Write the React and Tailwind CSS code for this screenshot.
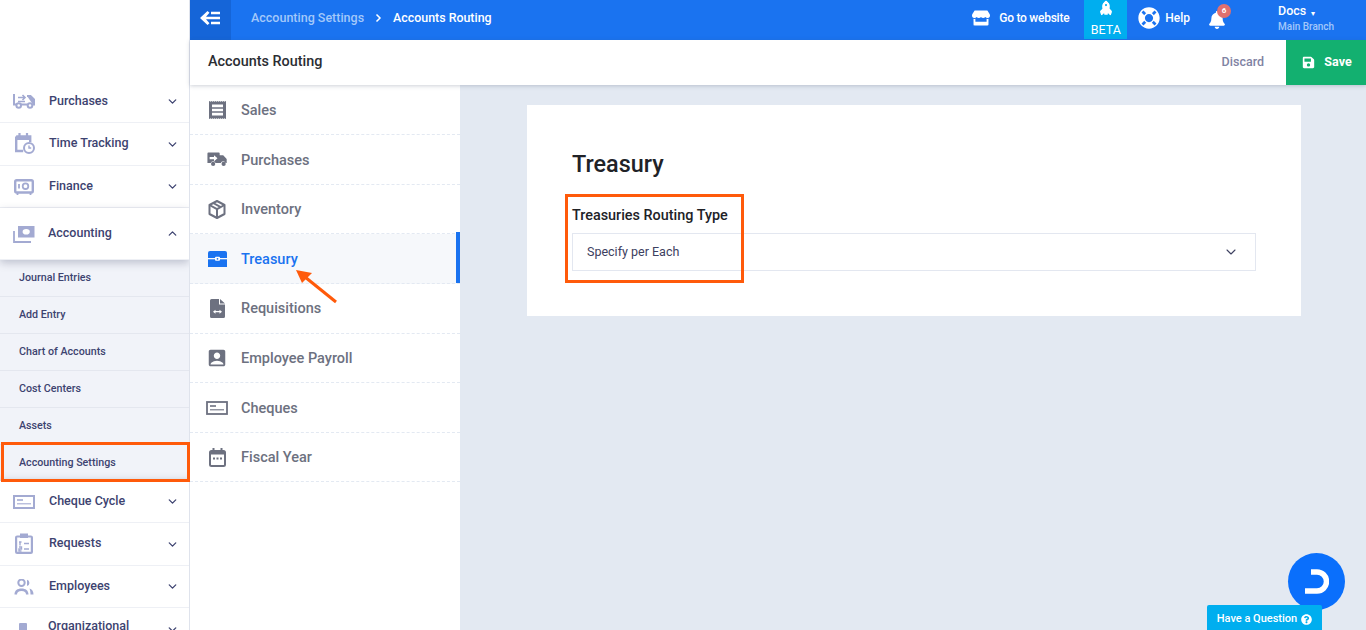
import React from "react";
import { ChevronDown, ChevronUp } from "lucide-react";
import { FaStore, FaRocket, FaLifeRing, FaBell, FaSave, FaQuestionCircle } from "react-icons/fa";
import { MdAccountBox } from "react-icons/md";

const L = "#a3aad2";
const G = "#6d7180";
const B = "#1a73f0";

const TruckArrow = ({ c, w = 24, h = 16 }) => (
  <svg width={w} height={h} viewBox="0 0 24 16" fill={c}>
    <path d="M1.5 0h12a1 1 0 0 1 1 1v2h4l4 4.5V12h-1.2a3 3 0 0 0-5.6 0H9.8a3 3 0 0 0-5.6 0H.5V1a1 1 0 0 1 1-1z" />
    <circle cx="7" cy="13" r="2.4" /><circle cx="19" cy="13" r="2.4" />
    <path d="M3 5.2h5V3l4 3.5-4 3.5V7.8H3z" fill="#fff" />
  </svg>
);
const TruckOutline = ({ c }) => (
  <svg width="22" height="15" viewBox="0 0 22 15" fill="none" stroke={c} strokeWidth="2">
    <path d="M1 0v10.500h2.500M8 10.500h6" />
    <path d="M14 2h3.500l3.500 3.500v5h-1" fill={c} />
    <circle cx="5.700" cy="11.500" r="2.300" /><circle cx="17" cy="11.500" r="2.300" />
    <path d="M5 3.500h7M9.500 1l2.500 2.500L9.500 6M12 7.500H5" strokeWidth="1.600" />
  </svg>
);
const CalClock = ({ c }) => (
  <svg width="20" height="21" viewBox="0 0 20 21" fill="none">
    <path d="M1.200 3.500h14v5.500M1.200 3.500v14.500h7" stroke={c} strokeWidth="2.400" />
    <path d="M1 3h15v4H1z" fill={c} />
    <path d="M4.500 0v4M12 0v4" stroke={c} strokeWidth="2.200" />
    <circle cx="14" cy="15" r="5" stroke={c} strokeWidth="2" />
    <path d="M14 12.500V15h2.200" stroke={c} strokeWidth="1.400" />
  </svg>
);
const Safe = ({ c }) => (
  <svg width="20" height="16" viewBox="0 0 20 16" fill="none">
    <rect x="1.200" y="1.200" width="17.600" height="12.300" rx="1.500" stroke={c} strokeWidth="2.400" />
    <circle cx="11.500" cy="7.200" r="2.800" stroke={c} strokeWidth="1.800" />
    <path d="M5 5v4.500" stroke={c} strokeWidth="1.800" />
    <path d="M3.500 14v2M16.500 14v2" stroke={c} strokeWidth="1.800" />
  </svg>
);
const Money = ({ c }) => (
  <svg width="22" height="18" viewBox="0 0 22 18" fill="none">
    <rect x="5" y="1" width="16.500" height="11.500" fill={c} />
    <ellipse cx="13.200" cy="6.800" rx="3.600" ry="2.800" fill="#fff" />
    <path d="M1 6v11h17" stroke={c} strokeWidth="1.800" />
  </svg>
);
const Cheque = ({ c, w = 22, h = 14, sw = 2 }) => (
  <svg width={w} height={h} viewBox="0 0 22 14" fill="none">
    <rect x="1" y="1" width="20" height="12" stroke={c} strokeWidth={sw} />
    <path d="M4 5h6" stroke={c} strokeWidth="1.600" />
    <path d="M4 8.800h14" stroke={c} strokeWidth="1.100" />
  </svg>
);
const Clip = ({ c }) => (
  <svg width="18" height="21" viewBox="0 0 18 21" fill="none">
    <rect x="1.100" y="3.500" width="15.800" height="16.400" rx="1" stroke={c} strokeWidth="2.200" />
    <rect x="5" y="0.500" width="8" height="4.500" fill={c} />
    <path d="M4 9h2.500M5 12.500v-3M4 14h2.500v2H4v2h2.500M9 10.500h5M9 16h5" stroke={c} strokeWidth="1.400" />
  </svg>
);
const People = ({ c }) => (
  <svg width="20" height="16" viewBox="0 0 20 16" fill={c}>
    <circle cx="7.500" cy="3.800" r="3.200" fill="none" stroke={c} strokeWidth="2" />
    <path d="M.5 15.500c0-4 2.800-6 7-6s7 2 7 6h-2.500c0-2.200-1.500-3.500-4.500-3.500s-4.500 1.300-4.500 3.500z" />
    <path d="M13 .8a3.200 3.200 0 0 1 0 6.200zM15.500 9.500c2.500.7 4 2.700 4 6H16.500c0-2.400-.4-4.300-1-6z" />
  </svg>
);
const Receipt = () => (
  <svg width="17" height="18" viewBox="0 0 17 18" fill={G}>
    <path d="M0 .6h17v16.800H0z" />
    <path d="M0 .4h17M0 17.600h17" stroke={G} strokeWidth="0.800" strokeDasharray="1 1" />
    <path d="M3 3.600h11v2.600H3zM3 7.800h11v2.400H3zM3 11.800h11v2.600H3z" fill="#fff" />
  </svg>
);
const Box = () => (
  <svg width="18" height="19" viewBox="0 0 18 19" fill="none" stroke={G} strokeWidth="2" strokeLinejoin="round">
    <path d="M9 1l7.500 4v9L9 18l-7.500-4V5z" />
    <path d="M1.500 5L9 9.200 16.500 5M9 9.200V18M5.200 3l7.500 4.200" />
  </svg>
);
const Chest = () => (
  <svg width="19" height="16" viewBox="0 0 19 16">
    <path d="M2 0h15a2 2 0 0 1 2 2v5H0V2a2 2 0 0 1 2-2z" fill={B} />
    <path d="M0 8.300h19V16H0z" fill={B} />
    <rect x="7" y="5.800" width="5" height="4" rx="1" fill="#fff" />
    <circle cx="9.500" cy="7.800" r="0.900" fill={B} />
  </svg>
);
const FileArrows = () => (
  <svg width="15" height="19" viewBox="0 0 15 19" fill={G}>
    <path d="M1.500 0H9v5.500h6V17.500a1.500 1.500 0 0 1-1.500 1.500h-12A1.500 1.500 0 0 1 0 17.500v-16A1.500 1.500 0 0 1 1.500 0zM10 0l5 4.500h-5z" />
    <path d="M3 12.700l2.500-2v1.400h4v-1.400l2.500 2-2.500 2v-1.400h-4v1.400z" fill="#fff" />
  </svg>
);
const Calendar = () => (
  <svg width="17" height="19" viewBox="0 0 17 19" fill="none">
    <rect x="1" y="3" width="15" height="15" rx="1.500" stroke={G} strokeWidth="2" />
    <path d="M1 3h15v3.500H1z" fill={G} />
    <path d="M4.500 0v4M12.500 0v4" stroke={G} strokeWidth="2" />
    <path d="M4 10.500h2M7.500 10.500h2M11 10.500h2" stroke={G} strokeWidth="1.800" />
  </svg>
);

const sub = ["Journal Entries", "Add Entry", "Chart of Accounts", "Cost Centers", "Assets", "Accounting Settings"];

function Row({ icon, label, h, open, x = "pl-[13px]", tx = "w-[36px]", lift = "pb-[2px]" }) {
  const Chev = open ? ChevronUp : ChevronDown;
  return (
    <div className={`flex items-center pr-[10px] border-b border-[#eef0f5] ${x} ${h}`}>
      <div className={`flex items-center shrink-0 ${tx} ${lift}`}>{icon}</div>
      <span className={`flex-1 text-[12.5px] font-medium text-[#3d4370] whitespace-nowrap ${lift}`}>{label}</span>
      <Chev size={13} strokeWidth={2.4} className="text-[#3d4370]" />
    </div>
  );
}

function Tab({ icon, label, active }) {
  return (
    <div className={`relative flex items-center h-[49.6px] border-b border-dashed border-[#e3e9f2] ${active ? "bg-[#f6f8fb]" : ""}`}>
      <div className="w-[51px] shrink-0 flex justify-center pl-[3px]">{icon}</div>
      <span className={`pt-[2px] text-[14.5px] font-medium ${active ? "text-[#1a73f0]" : "text-[#6d7180]"}`}>{label}</span>
      {active && <div className="absolute right-0 top-[-2px] bottom-0 w-[4px] bg-[#1a73f0]" />}
    </div>
  );
}

export default function App() {
  return (
    <div className="relative flex w-[1366px] h-[630px] overflow-hidden bg-[#e3e9f2] font-['Roboto',sans-serif]">
      {/* Sidebar */}
      <aside className="w-[190px] shrink-0 h-full bg-white border-r border-[#dfe3ec] overflow-hidden">
        <div className="h-[80px]" />
        <Row h="h-[43px]" label="Purchases" icon={<TruckOutline c={L} />} lift="" />
        <Row h="h-[43px]" label="Time Tracking" icon={<CalClock c={L} />} x="pl-[15px]" tx="w-[34px]" />
        <Row h="h-[42px]" label="Finance" icon={<Safe c={L} />} x="pl-[14px]" tx="w-[35px]" lift="" />
        <div className="relative z-10 shadow-[0_3px_8px_rgba(60,70,100,0.28)]">
          <Row h="h-[52px]" label="Accounting" open icon={<Money c={L} />} tx="w-[35px]" lift="" />
        </div>
        <div className="bg-[#f1f3f9]">
          {sub.map((s) => (
            <div key={s} className="flex items-center h-[37px] pl-[19px] text-[10.7px] font-medium text-[#3d4370] border-b border-[#e4e7ef] last:border-b-0 last:shadow-[inset_0_-7px_7px_-6px_rgba(60,70,100,0.25)] last:h-[36px]">
              {s}
            </div>
          ))}
        </div>
        <Row h="h-[42px]" label="Cheque Cycle" icon={<Cheque c={L} />} lift="" />
        <Row h="h-[43px]" label="Requests" icon={<Clip c={L} />} x="pl-[15px]" tx="w-[34px]" />
        <Row h="h-[42px]" label="Employees" icon={<People c={L} />} x="pl-[14px]" tx="w-[35px]" lift="" />
        <div className="flex items-start pl-[13px] pr-[10px] pt-[9px]">
          <div className="w-[35px] pl-[6px]">
            <div className="w-[8px] h-[10px] bg-[#a3aad2] mt-[6px] rounded-t-[1px]" />
          </div>
          <span className="flex-1 text-[12.5px] font-medium text-[#3d4370]">Organizational</span>
          <ChevronDown size={13} strokeWidth={2.4} className="text-[#3d4370] mt-[6px]" />
        </div>
      </aside>

      {/* Right */}
      <div className="flex-1 min-w-0 flex flex-col">
        <header className="h-[40px] bg-[#1a73f0] flex items-center text-white shrink-0">
          <div className="w-[41px] h-full bg-[#1565d8] flex items-center justify-center pb-[5px] pr-[1px]">
            <svg width="20" height="14" viewBox="0 0 20 14" fill="#fff">
              <path d="M7.500 0L9.500 1.800 6 5.700H20v2.600H6l3.500 3.900-2 1.800L0 7z" />
              <path d="M11 0.800h9v2.400h-9zM11 10.800h9v2.400h-9z" />
            </svg>
          </div>
          <div className="flex items-center pb-[4px]">
            <span className="ml-[20px] text-[12.5px] font-medium text-[#a3c8fa]">Accounting Settings</span>
            <svg className="ml-[11px]" width="7" height="10" viewBox="0 0 7 10" fill="none" stroke="#fff" strokeWidth="1.500"><path d="M1.500 1.500L5 5 1.500 8.500" /></svg>
            <span className="ml-[11px] text-[12.4px] font-medium">Accounts Routing</span>
          </div>
          <div className="flex-1" />
          <div className="flex items-center pb-[4px]">
            <FaStore size={18} />
            <span className="ml-[9px] w-[86px] text-[12px] tracking-[-0.25px] font-medium">Go to website</span>
          </div>
          <div className="w-[43px] h-[39px] self-start bg-[#00aeef] flex flex-col items-center pt-[2px] ml-[-1px]">
            <FaRocket size={14} className="-rotate-45 mt-[1px]" />
            <span className="text-[12.5px] leading-[14px] mt-[6px]">BETA</span>
          </div>
          <div className="flex items-center pb-[4px]">
            <FaLifeRing size={22} className="ml-[11px]" />
            <span className="ml-[5px] text-[12px] font-medium">Help</span>
            <div className="relative ml-[18px] mr-[52px] mt-[4px]">
              <FaBell size={18} />
              <span className="absolute -top-[7px] left-[9px] w-[14px] h-[14px] rounded-full bg-[#e0706f] text-[8px] font-bold flex items-center justify-center">6</span>
            </div>
          </div>
          <div className="w-[88px] flex flex-col pb-[4px]">
            <span className="text-[12.5px] font-medium leading-[14px]">Docs <span className="text-[8px] align-[-1px] ml-[2px]">▾</span></span>
            <span className="text-[10px] font-medium leading-[12px] text-[#a3c8fa]">Main Branch</span>
          </div>
        </header>

        <div className="relative z-10 h-[45px] shrink-0 bg-white flex items-center shadow-[0_1px_4px_rgba(60,70,100,0.25)]">
          <span className="ml-[18px] pb-[2px] text-[14.4px] font-medium text-[#2b2d33]">Accounts Routing</span>
          <div className="flex-1" />
          <span className="text-[12.5px] font-medium text-[#7f83a3] mr-[22px]">Discard</span>
          <div className="w-[80px] h-full bg-[#13b070] flex items-center justify-center gap-[9px] pl-[2px] text-white text-[12.5px] font-bold">
            <FaSave size={13} /> Save
          </div>
        </div>

        <div className="flex-1 flex min-h-0">
          <nav className="w-[270px] shrink-0 bg-white h-full pt-[0.7px]">
            <Tab label="Sales" icon={<Receipt />} />
            <Tab label="Purchases" icon={<TruckArrow c={G} w={21} h={15} />} />
            <Tab label="Inventory" icon={<Box />} />
            <Tab label="Treasury" active icon={<Chest />} />
            <Tab label="Requisitions" icon={<FileArrows />} />
            <Tab label="Employee Payroll" icon={<MdAccountBox size={22} color={G} />} />
            <Tab label="Cheques" icon={<Cheque c={G} sw={1.800} />} />
            <Tab label="Fiscal Year" icon={<Calendar />} />
          </nav>
          <main className="flex-1 min-w-0 pt-[20px] pl-[67px] pr-[65px]">
            <div className="h-[211px] bg-white pl-[45px] pr-[45px] pt-[43px]">
              <h1 className="text-[23.4px] leading-[32px] font-medium text-[#212227]">Treasury</h1>
              <div className="mt-[26px] text-[14.4px] leading-[20px] font-medium text-[#212227]">Treasuries Routing Type</div>
              <div className="mt-[7px] h-[38px] border border-[#e3e7f0] flex items-center justify-between pl-[14px] pr-[16px]">
                <span className="text-[12.5px] text-[#3d4060]">Specify per Each</span>
                <ChevronDown size={16} strokeWidth={1.600} className="text-[#3d4060]" />
              </div>
            </div>
          </main>
        </div>
      </div>

      {/* Annotations */}
      <div className="absolute left-[1px] top-[442px] w-[189px] h-[40px] border-[3px] border-[#ff5a0a]" />
      <div className="absolute left-[565px] top-[194px] w-[179px] h-[89px] border-[3px] border-[#ff5a0a]" />
      <svg className="absolute left-[292px] top-[265px]" width="48" height="42" viewBox="0 0 48 42" fill="none">
        <path d="M44 37L13 12" stroke="#ff5a0a" strokeWidth="3" />
        <path d="M4 5l16 3L10 18z" fill="#ff5a0a" />
      </svg>

      {/* Floating */}
      <div className="absolute left-[1288px] top-[553px] w-[57px] h-[57px] rounded-full bg-[#0a6ffc] flex items-center justify-center">
        <svg width="24" height="25" viewBox="0 0 24 25" fill="none">
          <path d="M6 3h6a9.500 9.500 0 0 1 0 19H0" stroke="#fff" strokeWidth="5.500" />
        </svg>
      </div>
      <div className="absolute left-[1207px] top-[605px] w-[115px] h-[25px] rounded-t-[2px] pt-[3px] bg-[#00aeef] flex items-center justify-center gap-[4px] text-white text-[11px] font-medium">
        Have a Question <FaQuestionCircle size={11} />
      </div>
    </div>
  );
}
